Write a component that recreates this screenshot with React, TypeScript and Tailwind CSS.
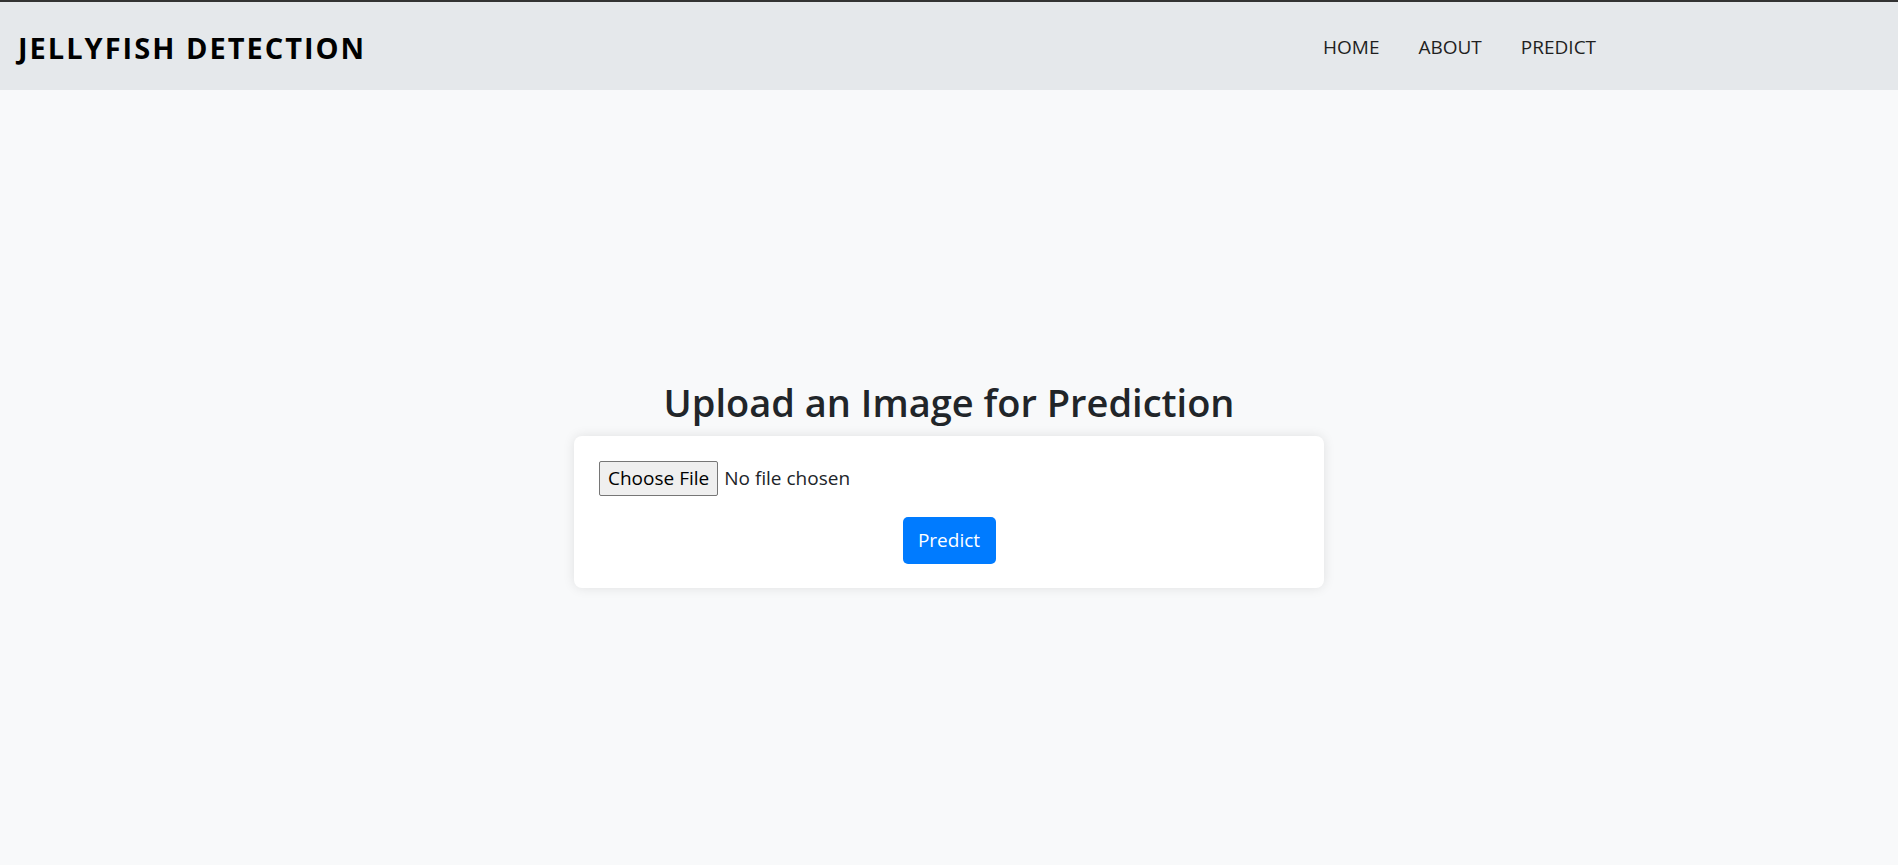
export default function App() {
  const font = { fontFamily: '"Open Sans", "Noto Sans", "Liberation Sans", sans-serif' };
  return (
    <div className="min-h-[865px] bg-[#f8f9fa] flex flex-col" style={font}>
      <div className="h-[2px] bg-[#333333]" />
      <header className="h-[88px] bg-[#e5e8eb] flex items-center pl-[18px] pt-[3px]">
        <div className="text-[29px] font-bold tracking-[2px] text-black leading-none w-[1305px]">
          JELLYFISH DETECTION
        </div>
        <nav className="flex items-center gap-[39px] text-[19px] text-[#1f1f1f] leading-none">
          <a className="cursor-pointer">HOME</a>
          <a className="cursor-pointer">ABOUT</a>
          <a className="cursor-pointer">PREDICT</a>
        </nav>
      </header>
      <main className="flex flex-col items-center pt-[288px]">
        <h1 className="text-[38px] font-semibold text-[#212529] leading-[48px] mb-[10px]">
          Upload an Image for Prediction
        </h1>
        <div className="w-[750px] bg-white rounded-[8px] shadow-[0_0_12px_rgba(0,0,0,0.1)] p-[25px] pb-[24px] flex flex-col">
          <div className="flex items-center h-[35px]">
            <label className="h-[35px] px-[8px] flex items-center bg-[#efefef] border border-[#767676] rounded-[2px] text-[19px] text-black cursor-pointer">
              Choose File
            </label>
            <span className="ml-[6px] text-[19px] text-[#212529]">No file chosen</span>
          </div>
          <div className="flex justify-center mt-[21px]">
            <button className="h-[47px] w-[93px] bg-[#007bff] text-white text-[19px] rounded-[5px] flex items-center justify-center">
              Predict
            </button>
          </div>
        </div>
      </main>
    </div>
  );
}
